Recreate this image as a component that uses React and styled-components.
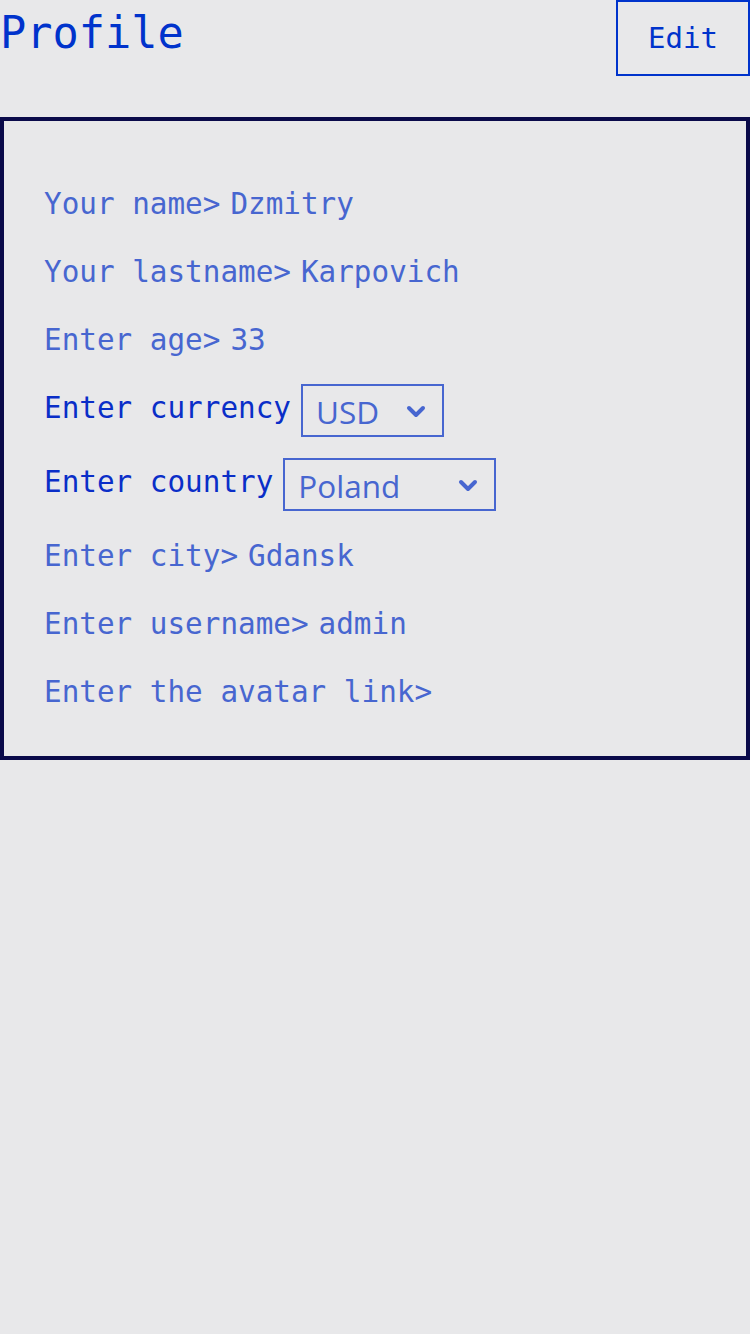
import React from "react";
import styled, { createGlobalStyle } from "styled-components";

const GlobalStyle = createGlobalStyle`
  html, body {
    margin: 0;
    padding: 0;
    background: #e8e8ea;
  }
  body {
    font-family: "DejaVu Sans Mono", "Liberation Mono", monospace;
  }
`;

const Page = styled.div`
  width: 750px;
  min-height: 1334px;
  background: #e8e8ea;
`;

const Header = styled.div`
  display: flex;
  justify-content: space-between;
  align-items: flex-start;
  height: 76px;
  margin-bottom: 41px;
`;

const Title = styled.h1`
  margin: 0;
  font-size: 43.6px;
  font-weight: 400;
  line-height: 66px;
  color: #0033cc;
`;

const EditButton = styled.button`
  width: 134px;
  height: 76px;
  background: transparent;
  border: 2px solid #0033cc;
  color: #0033cc;
  font-family: "DejaVu Sans Mono", monospace;
  font-size: 29px;
  padding: 0;
  cursor: pointer;
`;

const Card = styled.div`
  border: 4px solid #0a0a4a;
  padding: 59px 40px 41px;
  display: flex;
  flex-direction: column;
  gap: 21px;
`;

const Row = styled.div`
  display: flex;
  align-items: center;
  gap: 10px;
  height: ${(p) => (p.$select ? "53px" : "47px")};
  font-size: 29.3px;
  color: #4766d0;
`;

const Label = styled.span`
  white-space: pre;
  color: ${(p) => (p.$strong ? "#0a2ec8" : "#4766d0")};
  margin-top: ${(p) => (p.$strong ? "-6px" : "0")};
`;

const Value = styled.span`
  white-space: pre;
`;

const Select = styled.div`
  box-sizing: border-box;
  width: ${(p) => p.$width}px;
  height: 53px;
  border: 2px solid #4766d0;
  display: flex;
  align-items: center;
  justify-content: space-between;
  padding: 2px 16px 0 13px;
  font-family: "Open Sans", "Liberation Sans", sans-serif;
  font-size: 31.5px;
  color: #4766d0;
`;

const Chevron = () => (
  <svg width="20" height="14" viewBox="0 0 20 14">
    <path
      d="M3 3 L10 10 L17 3"
      fill="none"
      stroke="#4766d0"
      strokeWidth="4"
      strokeLinecap="round"
      strokeLinejoin="round"
    />
  </svg>
);

const fields = [
  { label: "Your name>", value: "Dzmitry" },
  { label: "Your lastname>", value: "Karpovich" },
  { label: "Enter age>", value: "33" },
  { label: "Enter currency", select: "USD", width: 143 },
  { label: "Enter country", select: "Poland", width: 213 },
  { label: "Enter city>", value: "Gdansk" },
  { label: "Enter username>", value: "admin" },
  { label: "Enter the avatar link>", value: "" },
];

const App = () => {
  return (
    <Page>
      <GlobalStyle />
      <Header>
        <Title>Profile</Title>
        <EditButton>Edit</EditButton>
      </Header>
      <Card>
        {fields.map((f) =>
          f.select ? (
            <Row key={f.label} $select>
              <Label $strong>{f.label}</Label>
              <Select $width={f.width}>
                <span>{f.select}</span>
                <Chevron />
              </Select>
            </Row>
          ) : (
            <Row key={f.label}>
              <Label>{f.label}</Label>
              <Value>{f.value}</Value>
            </Row>
          )
        )}
      </Card>
    </Page>
  );
};

export default App;
